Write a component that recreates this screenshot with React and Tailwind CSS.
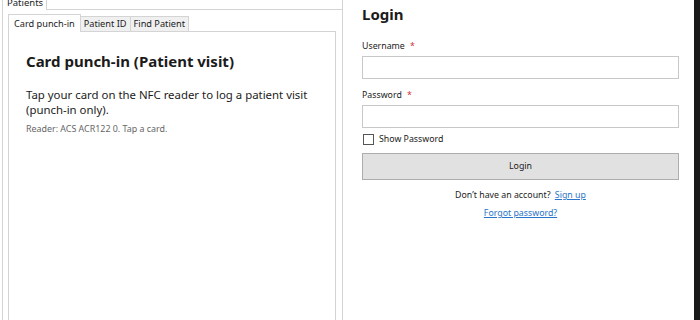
export default function App() {
  const font = { fontFamily: '"Segoe UI", "Noto Sans", sans-serif' }
  return (
    <div className="flex h-[320px] w-[700px] overflow-hidden bg-white text-[#1b1b1b]" style={font}>
      {/* left: Patients tab control */}
      <div className="flex h-full w-[343px] shrink-0 flex-col pl-[2px]">
        <div className="flex h-[10px]">
          <div className="w-[45px] border-x border-[#d4d4d4] pl-[4px]">
            <div className="-mt-[3px] text-[9.5px] leading-[11px]">Patients</div>
          </div>
          <div className="flex-1 border-b border-r border-[#d4d4d4]" />
        </div>
        <div className="flex flex-1 flex-col border-x border-[#d4d4d4] pl-[5px] pr-[6px] pt-[4px]">
          <div className="flex h-[18px] items-end">
            <div className="flex h-[18px] items-center border-x border-t border-[#d4d4d4] bg-white px-[5px] text-[9.2px]">Card punch-in</div>
            <div className="flex h-[16px] items-center border-b border-r border-t border-[#d4d4d4] bg-[#f0f0f0] px-[3px] text-[9.2px]">Patient ID</div>
            <div className="flex h-[16px] items-center border-b border-r border-t border-[#d4d4d4] bg-[#f0f0f0] px-[3px] text-[9.2px]">Find Patient</div>
            <div className="flex-1 self-stretch border-b border-[#d4d4d4]" />
          </div>
          <div className="flex-1 border-x border-[#d4d4d4] px-[17px] pt-[18px]">
            <h1 className="text-[15px] font-bold leading-[22px]">Card punch-in (Patient visit)</h1>
            <p className="mt-[15px] text-[11.4px] leading-[15px]">
              Tap your card on the NFC reader to log a patient visit (punch-in only).
            </p>
            <p className="mt-[6px] text-[8.9px] leading-[12px] text-[#666]">Reader: ACS ACR122 0. Tap a card.</p>
          </div>
        </div>
      </div>

      {/* right: Login */}
      <div className="flex flex-1 flex-col pl-[19px] pr-[15px] pt-[2px]">
        <h2 className="text-[15px] font-bold leading-[24px]">Login</h2>
        <label className="mt-[14px] text-[8.8px] leading-[12px]">
          Username <span className="ml-[3px] text-[#d13438]">*</span>
        </label>
        <div className="mt-[4px] h-[23px] border border-[#c8c8c8] bg-white" />
        <label className="mt-[10px] text-[8.8px] leading-[12px]">
          Password <span className="ml-[3px] text-[#d13438]">*</span>
        </label>
        <div className="mt-[4px] h-[23px] border border-[#c8c8c8] bg-white" />
        <div className="mt-[5px] flex items-center gap-[5px]">
          <span className="ml-[1px] h-[11px] w-[11px] border border-[#555] bg-white" />
          <span className="text-[8.8px] leading-[12px]">Show Password</span>
        </div>
        <button className="mt-[8px] flex h-[27px] items-center justify-center border border-[#adadad] bg-[#e1e1e1] text-[8.8px]">
          Login
        </button>
        <div className="mt-[9px] text-center text-[8.8px] leading-[12px]">
          Don’t have an account?{' '}
          <span className="ml-[2px] text-[#2a74c9] underline">Sign up</span>
        </div>
        <div className="mt-[6px] text-center text-[8.8px] leading-[12px] text-[#2a74c9] underline">Forgot password?</div>
      </div>
      <div className="w-[6px] shrink-0 bg-[#1a1a1a]" />
    </div>
  )
}
